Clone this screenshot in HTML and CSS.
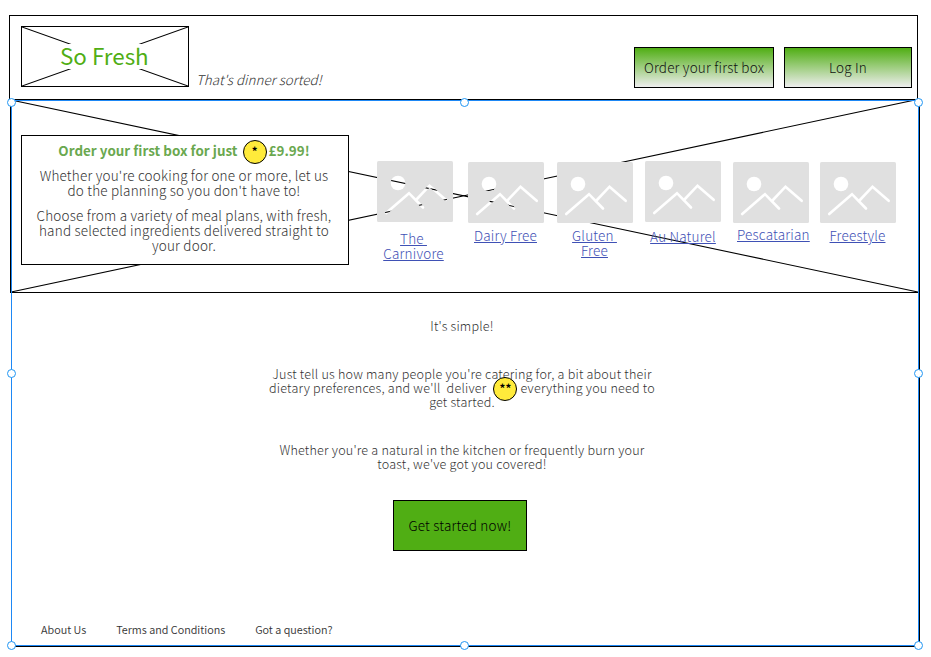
FILE: index.html
```html
<!DOCTYPE html>
<html lang="en">
<head>
<meta charset="utf-8">
<title>So Fresh</title>
<link rel="stylesheet" href="styles.css">
</head>
<body>
<svg class="defs" width="0" height="0">
  <mask id="scene">
    <rect width="76" height="61" rx="1.5" fill="#fff"/>
    <circle cx="21" cy="22" r="7.3" fill="#000"/>
    <g fill="none" stroke="#000" stroke-width="2.6" stroke-linecap="round">
      <path d="M9.2 52 32 32.2 46 46.5"/>
      <path d="M39 39 52.5 24.7 68.7 38.8"/>
    </g>
  </mask>
  <symbol id="picture" viewBox="0 0 76 61"><rect width="76" height="61" fill="#e0e0e0" mask="url(#scene)"/></symbol>
</svg>
<header class="top">
  <div class="logo">
    <svg class="cross" viewBox="0 0 168 61" preserveAspectRatio="none"><path d="M0 0 168 61M0 61 168 0"/></svg>
    <span class="logo-name">So Fresh</span>
  </div>
  <p class="tagline">That's dinner sorted!</p>
  <nav class="actions">
    <a class="btn order">Order your first box</a>
    <a class="btn login">Log In</a>
  </nav>
</header>
<main class="frame">
  <section class="hero">
    <svg class="cross" viewBox="0 0 907 192" preserveAspectRatio="none"><path d="M0 0 907 192M0 192 904 0"/></svg>
    <div class="offer">
      <h1>Order your first box for just <i class="note">*</i>£9.99!</h1>
      <p>Whether you're cooking for one or more, let us<br>do the planning so you don't have to!</p>
      <p>Choose from a variety of meal plans, with fresh,<br>hand selected ingredients delivered straight to<br>your door.</p>
    </div>
    <div class="diets">
      <a class="diet carnivore"><svg><use href="#picture"/></svg><span>The <br>Carnivore</span></a>
      <a class="diet dairy"><svg><use href="#picture"/></svg><span>Dairy Free</span></a>
      <a class="diet gluten"><svg><use href="#picture"/></svg><span>Gluten <br>Free</span></a>
      <a class="diet naturel"><svg><use href="#picture"/></svg><span>Au Naturel</span></a>
      <a class="diet pescatarian"><svg><use href="#picture"/></svg><span>Pescatarian</span></a>
      <a class="diet freestyle"><svg><use href="#picture"/></svg><span>Freestyle</span></a>
    </div>
  </section>
  <section class="intro">
    <p>It's simple!</p>
    <p>Just tell us how many people you're catering for, a bit about their<br>dietary preferences, and we'll&nbsp; deliver <i class="note">**</i>everything you need to<br>get started.</p>
    <p>Whether you're a natural in the kitchen or frequently burn your<br>toast, we've got you covered!</p>
    <a class="start">Get started now!</a>
  </section>
  <footer class="links"><a>About Us</a><a>Terms and Conditions</a><a>Got a question?</a></footer>
  <div class="selection">
    <i class="n w"></i><i class="n c"></i><i class="n e"></i>
    <i class="m w"></i><i class="m e"></i>
    <i class="s w"></i><i class="s c"></i><i class="s e"></i>
  </div>
</main>
</body>
</html>
```
FILE: styles.css
```css
* { box-sizing: border-box; }
body {
  margin: 0;
  padding: 15px 0 0 9px;
  width: 931px;
  height: 657px;
  overflow: hidden;
  background: #fff;
  color: #333;
  font: 300 13.5px/15px "Noto Sans CJK SC", "Open Sans", sans-serif;
  letter-spacing: 0.2px;
}
p, h1 { margin: 0; }
.defs { position: absolute; }
.cross { position: absolute; inset: 0; width: 100%; height: 100%; }
.cross path { fill: none; stroke: #000; stroke-width: 1.1; }

.top {
  display: flex;
  align-items: flex-start;
  width: 909px;
  height: 85px;
  padding: 10px 5px 0 11px;
  border: 1px solid #000;
}
.logo {
  position: relative;
  display: flex;
  align-items: center;
  justify-content: center;
  width: 168px;
  height: 61px;
  border: 1px solid #000;
}
.logo-name {
  position: relative;
  width: 90px;
  height: 25px;
  padding-right: 2px;
  background: #fff;
  color: #50ae14;
  font-size: 22.4px;
  font-weight: 400;
  letter-spacing: 0;
  line-height: 23px;
  text-align: center;
  white-space: nowrap;
}
.tagline { margin: 46px 0 0 7px; font-size: 13.4px; font-style: italic; letter-spacing: 0.05px; }
.actions { display: flex; gap: 10px; margin: 21px 0 0 auto; }
.btn {
  height: 41px;
  border: 1px solid #000;
  background: linear-gradient(#50ae14, #eee);
  color: #111;
  line-height: 39px;
  text-align: center;
}
.order { width: 140px; }
.login { width: 128px; }

.frame { position: relative; width: 910px; height: 547px; margin-left: 1px; }
.hero {
  position: relative;
  display: flex;
  width: 908px;
  height: 193px;
  padding-left: 10px;
  border: solid #000;
  border-width: 0 0 1px 1px;
}
.offer {
  position: relative;
  width: 328px;
  height: 130px;
  margin-top: 35px;
  padding: 7px 2px 0 0;
  border: 1px solid #000;
  background: #fff;
  text-align: center;
  white-space: nowrap;
}
.offer h1 {
  height: 15px;
  margin-bottom: 10px;
  color: #6aa84f;
  font-size: 13.4px;
  font-weight: 700;
  letter-spacing: 0.03px;
  line-height: 15px;
}
.offer p { margin-bottom: 10px; }
.note {
  display: inline-block;
  width: 24px;
  height: 24px;
  margin: -10px 2px -10px 2px;
  border: 1px solid #000;
  border-radius: 50%;
  background: #ffeb3b;
  color: #000;
  font-size: 11.5px;
  font-style: normal;
  font-weight: 700;
  letter-spacing: 0;
  line-height: 20px;
  text-align: center;
  vertical-align: middle;
}
.diets { position: relative; display: flex; margin: 61px 0 0 28px; }
.diet { width: 76px; text-align: center; white-space: pre; color: #3f51b5; }
.diet svg { display: block; width: 76px; height: 61px; }
.diet span { display: block; text-decoration: underline; }
.carnivore span { margin: 9px 0 0 -3px; }
.dairy { margin: 1px 0 0 15px; }
.gluten { margin: 1px 0 0 13px; }
.dairy span, .gluten span, .freestyle span { margin: 5px 0 0 -1px; }
.naturel { margin-left: 12px; }
.naturel span { margin-top: 7px; }
.pescatarian { margin: 1px 0 0 12px; }
.pescatarian span { margin: 4px 0 0 4px; }
.freestyle { margin: 1px 0 0 11px; }

.intro {
  display: flex;
  flex-direction: column;
  align-items: center;
  width: 904px;
  margin-top: 26px;
  font-size: 12.6px;
  line-height: 14px;
  text-align: center;
  white-space: nowrap;
}
.intro p + p { margin-top: 34px; }
.intro .note { position: relative; top: -1px; margin: -10px 3px -10px 4px; }
.start {
  width: 134px;
  height: 51px;
  margin: 29px 4px 0 0;
  border: 1px solid #000;
  background: #50ae14;
  color: #000;
  font-size: 13.5px;
  line-height: 49px;
}
.links {
  display: flex;
  gap: 30px;
  margin: 71px 0 0 31px;
  font-size: 10.8px;
  font-weight: 350;
  letter-spacing: 0;
  line-height: 14px;
}

.selection {
  position: absolute;
  inset: 0 0 0 1px;
  border: 1px solid #1e88f5;
  border-right-color: #000;
  border-bottom-color: #000;
  box-shadow: inset -1px -1px #1e88f5;
}
.selection i {
  position: absolute;
  width: 9px;
  height: 9px;
  border: 1px solid #2196f3;
  border-radius: 50%;
  background: #fff;
}
.selection .n { top: -3px; }
.selection .m { top: 268px; }
.selection .s { bottom: -4px; }
.selection .w { left: -5px; }
.selection .c { left: 448px; }
.selection .e { right: -4px; }
```
